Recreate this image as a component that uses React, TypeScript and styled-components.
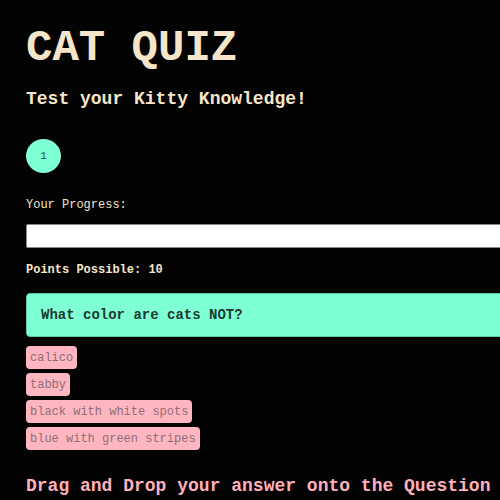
import React from 'react';
import styled, { createGlobalStyle } from 'styled-components';

const GlobalStyle = createGlobalStyle`
  html, body {
    margin: 0;
    padding: 0;
    background: #030303;
    overflow: hidden;
  }
`;

const Page = styled.div`
  min-width: 720px;
  padding: 23px 0 0 26px;
  font-family: 'Liberation Mono', 'Courier New', monospace;
  color: #f6e6c9;
`;

const Title = styled.h1`
  margin: 0;
  font-size: 44px;
  line-height: 50px;
  font-weight: 700;
`;

const Subtitle = styled.h2`
  margin: 15px 0 0;
  font-size: 18px;
  line-height: 22px;
  font-weight: 700;
`;

const StepBadge = styled.div`
  margin-top: 29px;
  width: 35px;
  height: 34px;
  border-radius: 50%;
  background: #7fffd4;
  color: #2b4a40;
  font-size: 11px;
  display: flex;
  align-items: center;
  justify-content: center;
`;

const Label = styled.div<{ $bold?: boolean; $gap: number }>`
  margin-top: ${({ $gap }) => $gap}px;
  font-size: 12px;
  line-height: 14px;
  font-weight: ${({ $bold }) => ($bold ? 700 : 400)};
`;

const ProgressTrack = styled.div`
  margin-top: 12px;
  height: 22px;
  background: #ffffff;
  border: 1px solid #8a8a8a;
  border-radius: 2px;
`;

const QuestionBox = styled.div`
  margin-top: 16px;
  height: 42px;
  display: flex;
  align-items: center;
  padding-left: 14px;
  background: #7fffd4;
  border: 1px solid #5cc9a5;
  border-radius: 4px;
  color: #1c3a31;
  font-size: 14px;
  font-weight: 700;
`;

const AnswerList = styled.div`
  margin-top: 9px;
  display: flex;
  flex-direction: column;
  align-items: flex-start;
  gap: 4px;
`;

const Answer = styled.div`
  height: 23px;
  display: flex;
  align-items: center;
  padding: 0 4px;
  background: #ffb6c1;
  border-radius: 4px;
  color: #8d6f75;
  font-size: 12px;
  cursor: grab;
`;

const DropHint = styled.h3`
  margin: 25px 0 0;
  font-size: 18px;
  line-height: 22px;
  font-weight: 700;
  color: #ffb0bb;
`;

const answers = ['calico', 'tabby', 'black with white spots', 'blue with green stripes'];

export default function App() {
  return (
    <>
      <GlobalStyle />
      <Page>
        <Title>CAT QUIZ</Title>
        <Subtitle>Test your Kitty Knowledge!</Subtitle>
        <StepBadge>1</StepBadge>
        <Label $gap={25}>Your Progress:</Label>
        <ProgressTrack />
        <Label $gap={15} $bold>
          Points Possible: 10
        </Label>
        <QuestionBox>What color are cats NOT?</QuestionBox>
        <AnswerList>
          {answers.map((a) => (
            <Answer key={a} draggable>
              {a}
            </Answer>
          ))}
        </AnswerList>
        <DropHint>Drag and Drop your answer onto the Question</DropHint>
      </Page>
    </>
  );
}
